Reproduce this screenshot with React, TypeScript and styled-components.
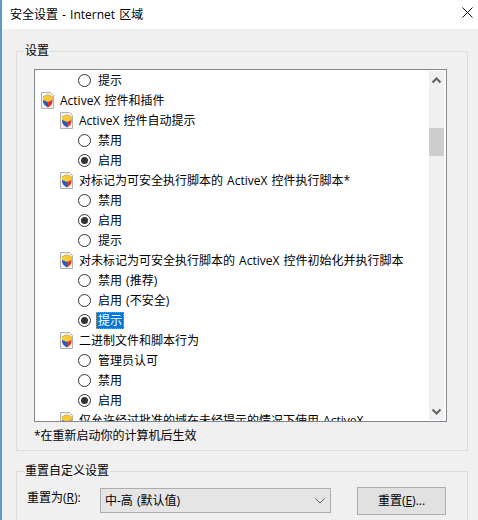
import React from 'react';
import styled, { createGlobalStyle } from 'styled-components';

const GlobalStyle = createGlobalStyle`
  html, body {
    margin: 0;
    padding: 0;
    background: #f0f0f0;
    overflow: hidden;
  }
  * { box-sizing: border-box; }
`;

const font = `"Open Sans", "Noto Sans CJK SC", sans-serif`;

type Row =
  | { kind: 'radio'; label: string; checked?: boolean; selected?: boolean }
  | { kind: 'group'; label: string; level: 1 | 2 };

const rows: Row[] = [
  { kind: 'radio', label: '提示' },
  { kind: 'group', level: 1, label: 'ActiveX 控件和插件' },
  { kind: 'group', level: 2, label: 'ActiveX 控件自动提示' },
  { kind: 'radio', label: '禁用' },
  { kind: 'radio', label: '启用', checked: true },
  { kind: 'group', level: 2, label: '对标记为可安全执行脚本的 ActiveX 控件执行脚本*' },
  { kind: 'radio', label: '禁用' },
  { kind: 'radio', label: '启用', checked: true },
  { kind: 'radio', label: '提示' },
  { kind: 'group', level: 2, label: '对未标记为可安全执行脚本的 ActiveX 控件初始化并执行脚本' },
  { kind: 'radio', label: '禁用 (推荐)' },
  { kind: 'radio', label: '启用 (不安全)' },
  { kind: 'radio', label: '提示', checked: true, selected: true },
  { kind: 'group', level: 2, label: '二进制文件和脚本行为' },
  { kind: 'radio', label: '管理员认可' },
  { kind: 'radio', label: '禁用' },
  { kind: 'radio', label: '启用', checked: true },
  { kind: 'group', level: 2, label: '仅允许经过批准的域在未经提示的情况下使用 ActiveX' },
];

const ShieldIcon = () => (
  <svg width="13" height="17" viewBox="0 0 13 17">
    <path d="M0.5 0.5H9.5L12.5 3.5V16.5H0.5Z" fill="#f6f4f2" stroke="#b4b0ac" />
    <path d="M7 2.5L11.5 4.5V9.5C11.5 12 9.5 14 7 15.5Z" fill="#d8342c" />
    <path d="M7 2.5L2 4.5V9.5C2 12 4.5 14 7 15.5Z" fill="#2f57b8" />
    <path d="M7 2.5L2 4.5V8L7 10L11.5 8V4.5Z" fill="#f4c93a" />
  </svg>
);

const Window = () => (
  <Frame>
    <TitleBar>
      <TitleText>安全设置 - Internet 区域</TitleText>
      <CloseIcon width="11" height="11" viewBox="0 0 11 11">
        <path d="M0.5 0.5L10.5 10.5M10.5 0.5L0.5 10.5" stroke="#111" strokeWidth="1" fill="none" />
      </CloseIcon>
    </TitleBar>
    <Body>
      <SettingsGroup>
        <Legend>设置</Legend>
        <ListBox>
          <Rows>
            {rows.map((row, i) =>
              row.kind === 'radio' ? (
                <RadioRow key={i}>
                  <Radio $checked={row.checked} />
                  <RadioLabel $selected={row.selected}>{row.label}</RadioLabel>
                </RadioRow>
              ) : (
                <GroupRow key={i} $level={row.level}>
                  <ShieldIcon />
                  <GroupLabel>{row.label}</GroupLabel>
                </GroupRow>
              )
            )}
          </Rows>
          <ScrollBar>
            <ScrollButton>
              <svg width="11" height="8" viewBox="0 0 11 8">
                <path d="M1.5 6.5L5.5 2.5L9.5 6.5" stroke="#606060" strokeWidth="2" fill="none" />
              </svg>
            </ScrollButton>
            <ScrollTrack>
              <ScrollThumb />
            </ScrollTrack>
            <ScrollButton>
              <svg width="11" height="8" viewBox="0 0 11 8">
                <path d="M1.5 1.5L5.5 5.5L9.5 1.5" stroke="#606060" strokeWidth="2" fill="none" />
              </svg>
            </ScrollButton>
          </ScrollBar>
        </ListBox>
        <Note>*在重新启动你的计算机后生效</Note>
      </SettingsGroup>
      <ResetGroup>
        <Legend>重置自定义设置</Legend>
        <ResetLabel>
          重置为(<u>R</u>):
        </ResetLabel>
        <Select>
          <span>中-高 (默认值)</span>
          <svg width="10" height="6" viewBox="0 0 10 6">
            <path d="M0.5 0.5L5 5L9.5 0.5" stroke="#606060" strokeWidth="1" fill="none" />
          </svg>
        </Select>
        <ResetButton>
          重置(<u>E</u>)...
        </ResetButton>
      </ResetGroup>
    </Body>
  </Frame>
);

export default function App() {
  return (
    <>
      <GlobalStyle />
      <Window />
    </>
  );
}

const Frame = styled.div`
  width: 478px;
  height: 520px;
  overflow: hidden;
  display: flex;
  flex-direction: column;
  border-left: 2px solid #5b9bc4;
  font-family: ${font};
  font-size: 12px;
  word-spacing: 1px;
  color: #000;
`;

const TitleBar = styled.div`
  height: 29px;
  flex: none;
  background: #fff;
  display: flex;
  align-items: center;
  justify-content: space-between;
  padding: 0 5px 1px 8px;
`;

const TitleText = styled.span`
  padding-top: 2px;
  line-height: 16px;
`;

const CloseIcon = styled.svg`
  display: block;
  margin-top: -3px;
`;

const Body = styled.div`
  flex: 1;
  background: #f0f0f0;
  padding: 22px 10px 0 14px;
  display: flex;
  flex-direction: column;
  gap: 20px;
`;

const SettingsGroup = styled.div`
  position: relative;
  height: 400px;
  flex: none;
  border: 1px solid #dcdcdc;
  padding: 17px 20px 0 17px;
`;

const Legend = styled.div`
  position: absolute;
  top: -9px;
  left: 7px;
  padding: 0 1px;
  background: #f0f0f0;
  line-height: 16px;
`;

const ListBox = styled.div`
  height: 353px;
  border: 1px solid #828790;
  background: #fff;
  display: flex;
  overflow: hidden;
`;

const Rows = styled.div`
  flex: 1;
  min-width: 0;
  overflow: hidden;
  white-space: nowrap;
`;

const RadioRow = styled.div`
  height: 20px;
  display: flex;
  align-items: center;
  padding-left: 43px;
`;

const Radio = styled.span<{ $checked?: boolean }>`
  width: 13px;
  height: 13px;
  flex: none;
  border: 1px solid #333;
  border-radius: 50%;
  background: #fff;
  display: flex;
  align-items: center;
  justify-content: center;
  &::after {
    content: '';
    width: 7px;
    height: 7px;
    border-radius: 50%;
    background: ${p => (p.$checked ? '#333' : 'transparent')};
  }
`;

const RadioLabel = styled.span<{ $selected?: boolean }>`
  margin-left: 5px;
  padding: 0 1px;
  height: 17px;
  line-height: 16px;
  border: 1px dotted ${p => (p.$selected ? '#f08a1c' : 'transparent')};
  background: ${p => (p.$selected ? '#0078d7' : 'transparent')};
  color: ${p => (p.$selected ? '#fff' : '#000')};
`;

const GroupRow = styled.div<{ $level: 1 | 2 }>`
  height: 20px;
  display: flex;
  align-items: center;
  gap: 6px;
  padding-left: ${p => (p.$level === 1 ? 6 : 25)}px;
  svg { flex: none; }
`;

const GroupLabel = styled.span`
  padding-top: 2px;
  line-height: 16px;
`;

const ScrollBar = styled.div`
  width: 15px;
  margin: 1px 2px 1px 0;
  flex: none;
  background: #f0f0f0;
  display: flex;
  flex-direction: column;
`;

const ScrollButton = styled.div`
  height: 17px;
  flex: none;
  display: flex;
  align-items: center;
  justify-content: center;
`;

const ScrollTrack = styled.div`
  flex: 1;
  padding-top: 40px;
`;

const ScrollThumb = styled.div`
  height: 28px;
  background: #cdcdcd;
`;

const Note = styled.div`
  margin-top: 6px;
  line-height: 16px;
`;

const ResetGroup = styled.div`
  position: relative;
  flex: 1;
  border: 1px solid #dcdcdc;
  border-bottom: none;
  padding: 16px 20px 0 10px;
  display: flex;
  align-items: flex-start;
`;

const ResetLabel = styled.div`
  width: 73px;
  flex: none;
  margin-top: 2px;
  line-height: 16px;
`;

const Select = styled.div`
  width: 231px;
  height: 25px;
  flex: none;
  border: 1px solid #adadad;
  background: #e5e5e5;
  display: flex;
  align-items: center;
  justify-content: space-between;
  padding: 0 5px 0 4px;
  line-height: 16px;
`;

const ResetButton = styled.div`
  width: 89px;
  height: 28px;
  flex: none;
  margin: -1px 0 0 26px;
  border: 1px solid #adadad;
  background: #e1e1e1;
  display: flex;
  align-items: center;
  justify-content: center;
  line-height: 16px;
`;
